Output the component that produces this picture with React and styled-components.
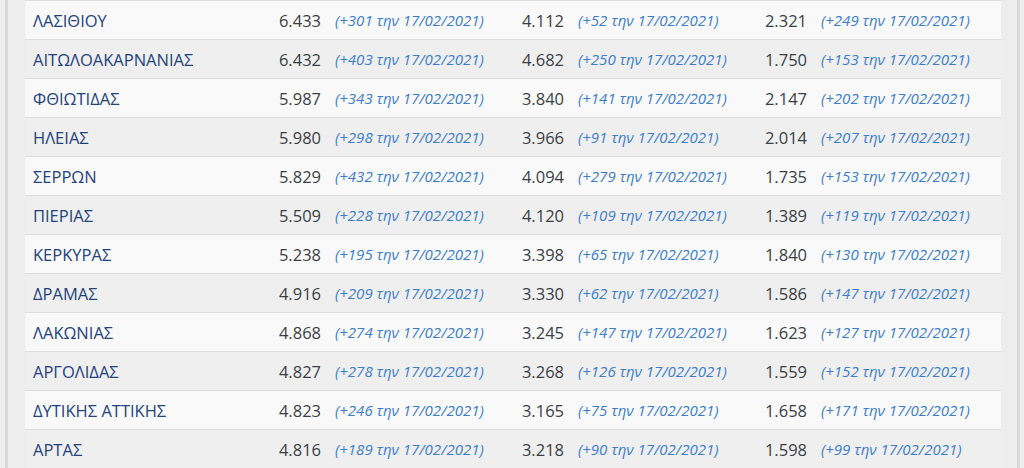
import React from "react";
import styled, {createGlobalStyle} from "styled-components";

const rows = [
    ["ΛΑΣΙΘΙΟΥ", "6.433", 301, "4.112", 52, "2.321", 249],
    ["ΑΙΤΩΛΟΑΚΑΡΝΑΝΙΑΣ", "6.432", 403, "4.682", 250, "1.750", 153],
    ["ΦΘΙΩΤΙΔΑΣ", "5.987", 343, "3.840", 141, "2.147", 202],
    ["ΗΛΕΙΑΣ", "5.980", 298, "3.966", 91, "2.014", 207],
    ["ΣΕΡΡΩΝ", "5.829", 432, "4.094", 279, "1.735", 153],
    ["ΠΙΕΡΙΑΣ", "5.509", 228, "4.120", 109, "1.389", 119],
    ["ΚΕΡΚΥΡΑΣ", "5.238", 195, "3.398", 65, "1.840", 130],
    ["ΔΡΑΜΑΣ", "4.916", 209, "3.330", 62, "1.586", 147],
    ["ΛΑΚΩΝΙΑΣ", "4.868", 274, "3.245", 147, "1.623", 127],
    ["ΑΡΓΟΛΙΔΑΣ", "4.827", 278, "3.268", 126, "1.559", 152],
    ["ΔΥΤΙΚΗΣ ΑΤΤΙΚΗΣ", "4.823", 246, "3.165", 75, "1.658", 171],
    ["ΑΡΤΑΣ", "4.816", 189, "3.218", 90, "1.598", 99]
];

const DATE = "17/02/2021";

const StatCell = ({value, delta}) => (
    <Stat>
        <Num>{value}</Num>
        <Delta>(+{delta} την {DATE})</Delta>
    </Stat>
);

export default function App() {
    return (
        <>
            <GlobalStyle/>
            <Frame>
                <Table>
                    {rows.map(([name, c1, d1, c2, d2, c3, d3], i) => (
                        <Row key={name} $odd={i % 2 === 0}>
                            <Name>{name}</Name>
                            <StatCell value={c1} delta={d1}/>
                            <StatCell value={c2} delta={d2}/>
                            <StatCell value={c3} delta={d3}/>
                        </Row>
                    ))}
                </Table>
            </Frame>
        </>
    );
}

const GlobalStyle = createGlobalStyle`
  html, body {
    margin: 0;
    padding: 0;
    background: #ededed;
    font-family: "Open Sans", "Noto Sans", sans-serif;
  }
`;

const Frame = styled.div`
  margin: 0 4px 0 5px;
  padding: 0 16px 0 17px;
  border-left: 3px solid #d9d9d9;
  border-right: 3px solid #d9d9d9;
  background: #ededed;
  height: 468px;
  overflow: hidden;
`;

const Table = styled.div`
  display: flex;
  flex-direction: column;
`;

const Row = styled.div`
  display: grid;
  grid-template-columns: 247px 243px 243px 243px;
  align-items: center;
  height: 39px;
  box-sizing: border-box;
  border-top: 1px solid #dedede;
  background: ${p => (p.$odd ? "#f9f9f9" : "#efefef")};
`;

const Name = styled.div`
  padding-left: 8px;
  font-size: 16.5px;
  color: #24437c;
  white-space: nowrap;
`;

const Stat = styled.div`
  display: flex;
  align-items: center;
  white-space: nowrap;
`;

const Num = styled.span`
  width: 49px;
  text-align: right;
  margin-right: 14px;
  font-size: 16.5px;
  color: #3b3f45;
`;

const Delta = styled.span`
  font-size: 15px;
  font-style: italic;
  color: #3b7dcb;
`;
